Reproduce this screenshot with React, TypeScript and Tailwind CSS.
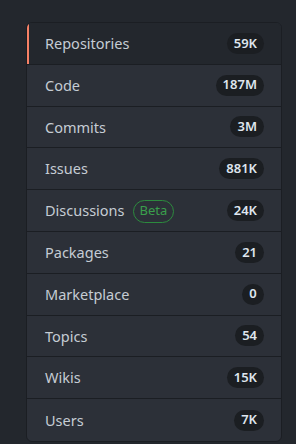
import React from 'react';

interface Item {
  label: string;
  count: string;
  beta?: boolean;
}

const items: Item[] = [
  { label: 'Repositories', count: '59K' },
  { label: 'Code', count: '187M' },
  { label: 'Commits', count: '3M' },
  { label: 'Issues', count: '881K' },
  { label: 'Discussions', count: '24K', beta: true },
  { label: 'Packages', count: '21' },
  { label: 'Marketplace', count: '0' },
  { label: 'Topics', count: '54' },
  { label: 'Wikis', count: '15K' },
  { label: 'Users', count: '7K' },
];

const App: React.FC = () => {
  return (
    <div
      className="w-[296px] h-[444px] bg-[#23272d] pt-[22px] pl-[26px]"
      style={{ fontFamily: '"Noto Sans", "Open Sans", Arial, sans-serif' }}
    >
      <nav className="w-[256px] rounded-md border border-[#1b1e23] overflow-hidden bg-[#2c3038]">
        {items.map((item, i) => {
          const selected = i === 0;
          return (
            <div
              key={item.label}
              className={`relative flex items-center justify-between h-[41.8px] pl-[18px] pr-[17px] ${
                i < items.length - 1 ? 'border-b border-[#1b1e23]' : ''
              } ${selected ? 'bg-[#23272d]' : ''}`}
            >
              {selected && <span className="absolute left-0 top-0 bottom-0 w-[2px] bg-[#f78166]" />}
              <div className="flex items-center gap-[8px] pt-[1px]">
                <span className="text-[14.5px] text-[#c5ccd4]">{item.label}</span>
                {item.beta && (
                  <span className="rounded-full border border-[#2c8a3e] px-[6px] h-[23px] flex items-center text-[13px] text-[#3a9f4c]">
                    Beta
                  </span>
                )}
              </div>
              <span className="min-w-[22px] h-[21px] px-[7px] rounded-full bg-[#1b1e22] flex items-center justify-center text-[13px] font-semibold text-[#dfe6ee]">
                {item.count}
              </span>
            </div>
          );
        })}
      </nav>
    </div>
  );
};

export default App;
